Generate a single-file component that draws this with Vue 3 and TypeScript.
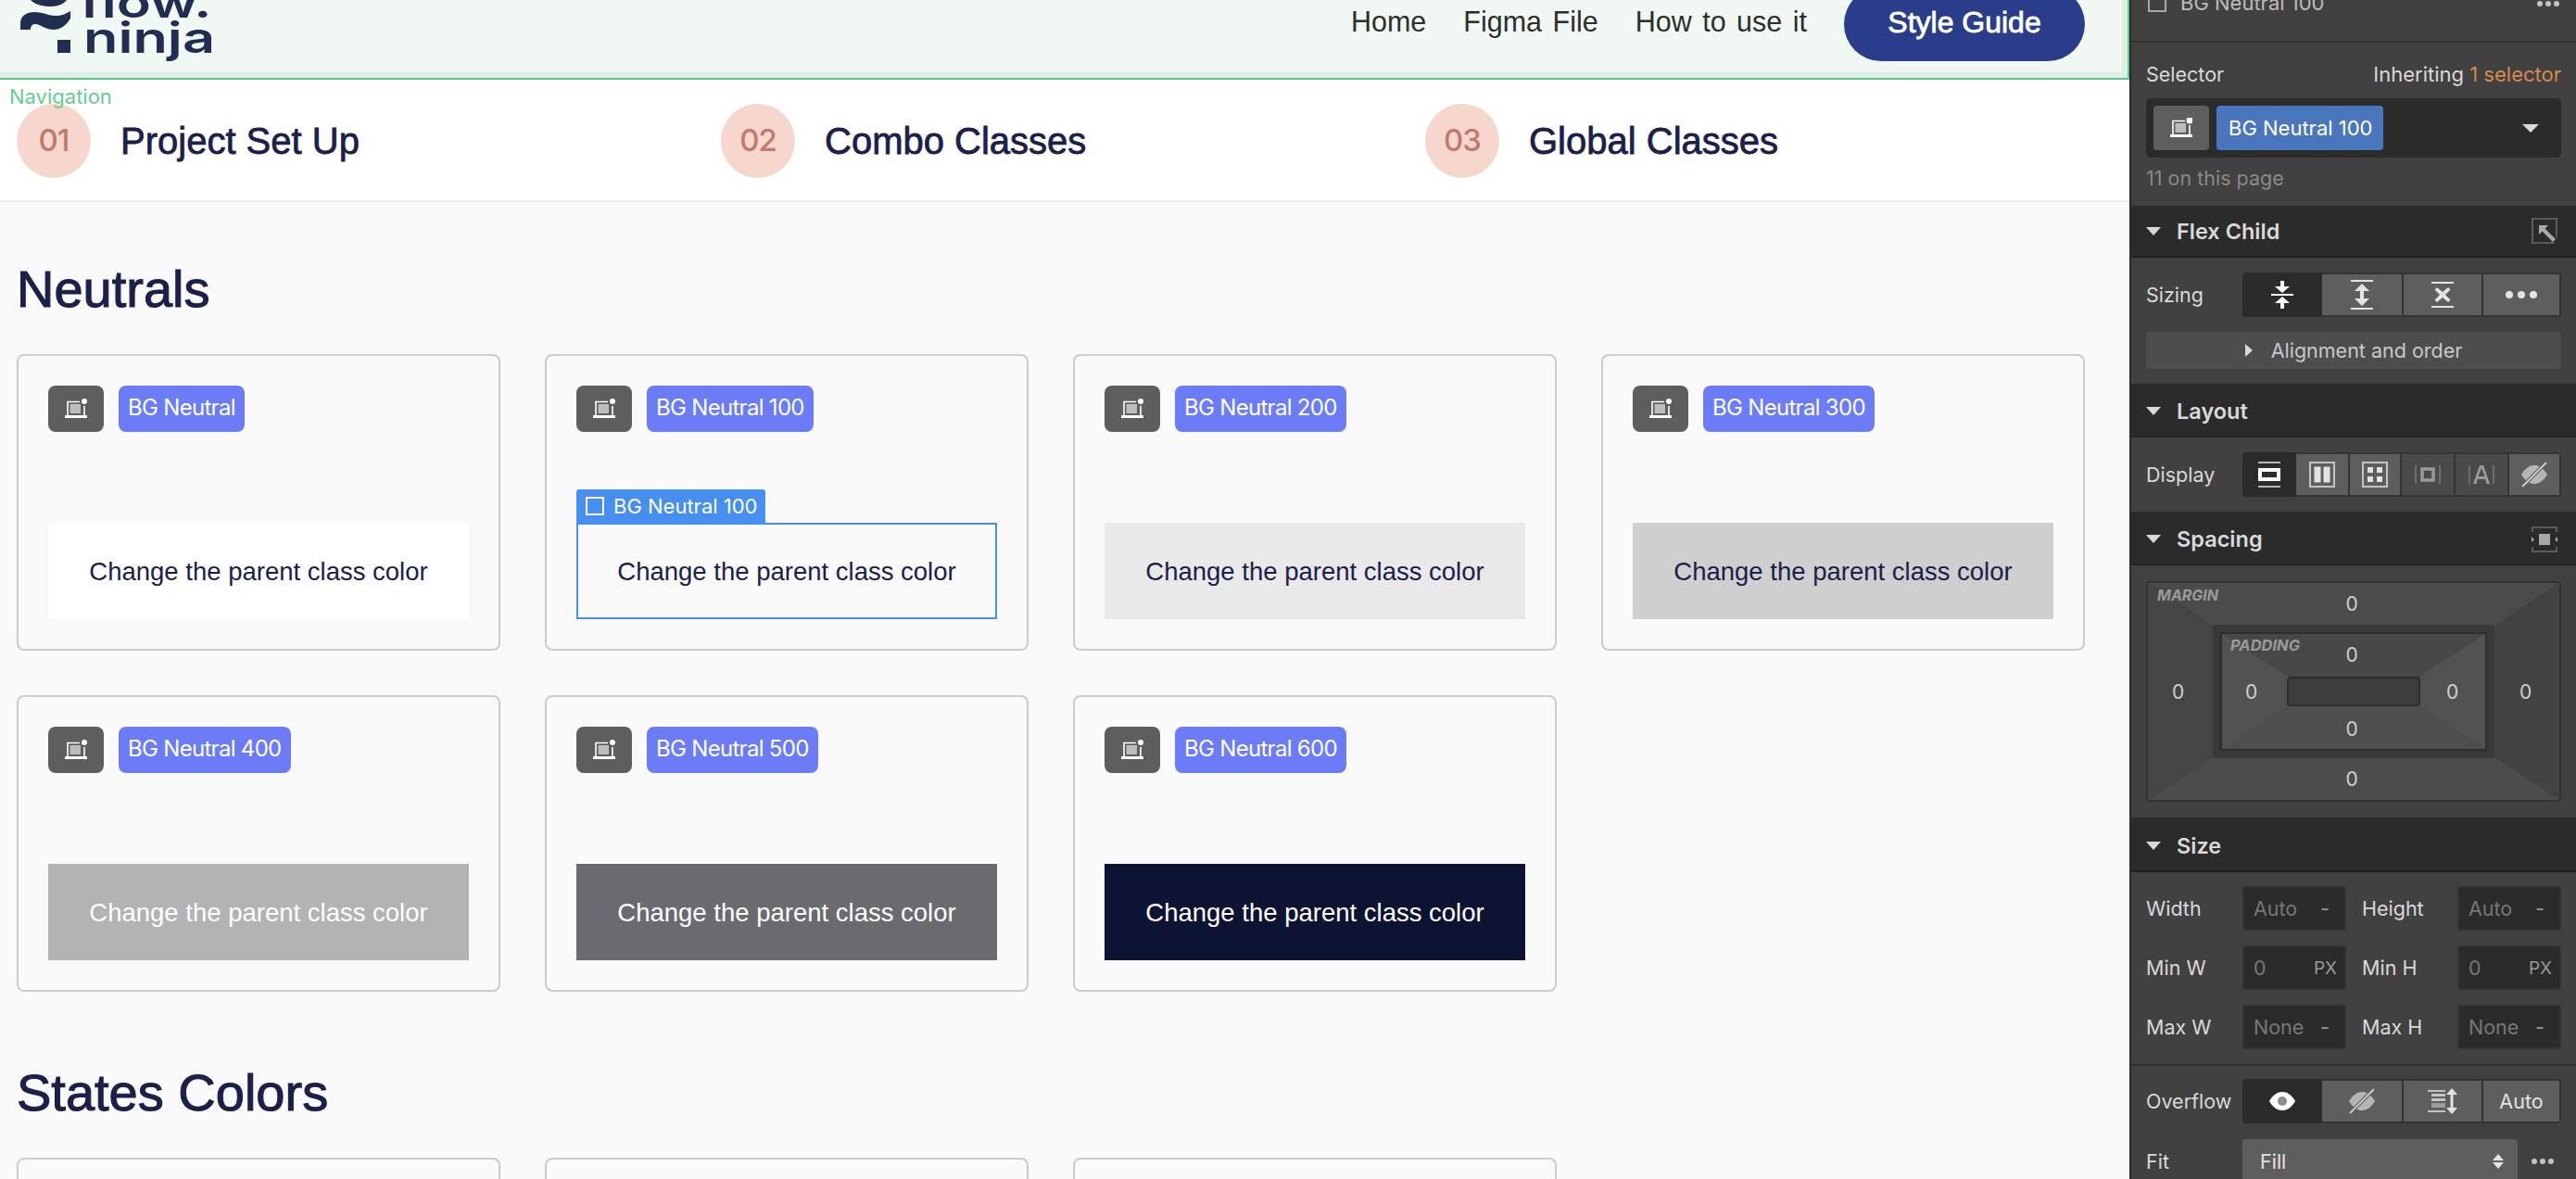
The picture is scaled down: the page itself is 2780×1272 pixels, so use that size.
<template>
  <div class="page">
    <main class="canvas">
      <header class="nav">
        <div class="nav-inner">
          <a class="logo">
            <svg class="logo-mark" width="80" height="60" viewBox="0 0 80 60">
              <path d="M33 0 C39 6 48 7 55 7 C63 7 69 4 72 0 Z" />
              <path d="M22 32 V25 C22 17 29 13 37 13 C47 13 52 17 60 17 C66 17 71 15 76 12 V20 C71 28 65 32 58 32 C48 32 44 26 38 26 C35 26 33 28 33 32 Z" />
              <rect x="62" y="43" width="14" height="14" />
            </svg>
            <span class="logo-flow">flow.</span>
            <span class="logo-ninja">ninja</span>
          </a>
          <nav class="links">
            <a>Home</a>
            <a>Figma File</a>
            <a>How to use it</a>
            <button class="guide">Style Guide</button>
          </nav>
        </div>
      </header>
      <span class="nav-label">Navigation</span>

      <div class="steps">
        <div v-for="step in steps" :key="step.num" class="step">
          <span class="step-num">{{ step.num }}</span>
          <span class="step-title">{{ step.title }}</span>
        </div>
      </div>

      <section class="group">
        <h2>Neutrals</h2>
        <div class="card-grid">
          <article v-for="card in neutrals" :key="card.name" class="card">
            <div class="tag-row">
              <span class="class-icon">
                <svg width="24" height="22" viewBox="0 0 24 22">
                  <path d="M3 18V3.5H16" fill="none" stroke="#fff" stroke-width="1.6" />
                  <rect x="5.5" y="6" width="11.5" height="10" fill="#bdbdbd" />
                  <path d="M21 8v10" stroke="#fff" stroke-width="1.6" />
                  <circle cx="21" cy="3" r="3" fill="#fff" />
                  <rect x="0" y="18" width="24" height="3" fill="#fff" />
                </svg>
              </span>
              <span class="tag">{{ card.name }}</span>
            </div>
            <div :class="['swatch', card.cls]">
              <span v-if="card.selected" class="sel-label"><i class="sel-box"></i>{{ card.name }}</span>
              Change the parent class color
            </div>
          </article>
        </div>
      </section>

      <section class="group states">
        <h2>States Colors</h2>
        <div class="card-grid">
          <article v-for="n in 3" :key="n" class="card"></article>
        </div>
      </section>
    </main>

    <aside class="panel">
      <div class="panel-top">
        <span class="top-check"></span>
        <span class="top-name">BG Neutral 100</span>
        <span class="dots top-dots"><i></i><i></i><i></i></span>
      </div>

      <div class="selector">
        <div class="sel-head">
          <span>Selector</span>
          <span class="inherit">Inheriting <em>1 selector</em></span>
        </div>
        <div class="sel-field">
          <span class="sel-icon">
            <svg width="24" height="22" viewBox="0 0 24 22">
              <path d="M3 18V3.5H16" fill="none" stroke="#fff" stroke-width="1.6" />
              <rect x="5.5" y="6" width="11.5" height="10" fill="#bdbdbd" />
              <path d="M21 8v10" stroke="#fff" stroke-width="1.6" />
              <circle cx="21" cy="3" r="3.5" fill="#fff" />
              <rect x="0" y="18" width="24" height="3" fill="#fff" />
            </svg>
          </span>
          <span class="sel-tag">BG Neutral 100</span>
          <i class="sel-caret"></i>
        </div>
        <div class="sel-count">11 on this page</div>
      </div>

      <div class="p-head flex-head">
        <i class="tri"></i><span>Flex Child</span>
        <svg class="head-icon" width="28" height="28" viewBox="0 0 28 28">
          <path d="M24 27H1V1h26v20" fill="none" stroke="#6b6b6b" stroke-width="1.6" />
          <path d="M8 8h10l-3.5 3.5L26 23l-3 3-11.500-11.500L8 18Z" fill="#a8a8a8" />
        </svg>
      </div>
      <div class="p-body sizing">
        <div class="row">
          <span class="lbl">Sizing</span>
          <div class="seg seg-4">
            <span class="on">
              <svg width="24" height="30" viewBox="0 0 24 30" fill="#fff">
                <path d="M0 14h24v2H0z" />
                <path d="M10 0h4v6h6l-8 7-8-7h6z" />
                <path d="M12 17l8 7h-6v6h-4v-6H4z" />
              </svg>
            </span>
            <span>
              <svg width="24" height="32" viewBox="0 0 24 32" fill="#e3e3e3">
                <path d="M0 0h24v2H0zM0 30h24v2H0z" />
                <path d="M12 4l8 8h-6v8h6l-8 8-8-8h6v-8H4z" />
              </svg>
            </span>
            <span>
              <svg width="24" height="28" viewBox="0 0 24 28" fill="#e3e3e3">
                <path d="M0 0h24v2H0zM0 26h24v2H0z" />
                <path d="M6 6l6 5 6-5 2.500 2.500-5.500 5.500 5.500 5.500L18 22l-6-5-6 5-2.500-2.500L9 14 3.500 8.500z" />
              </svg>
            </span>
            <span class="dots big"><i></i><i></i><i></i></span>
          </div>
        </div>
        <div class="align-btn"><i class="tri-r"></i>Alignment and order</div>
      </div>

      <div class="p-head layout-head">
        <i class="tri"></i><span>Layout</span>
      </div>
      <div class="p-body display">
        <div class="row">
          <span class="lbl">Display</span>
          <div class="seg seg-6">
            <span class="on">
              <svg width="24" height="28" viewBox="0 0 24 28">
                <path d="M0 1h24M0 27h24" stroke="#e6e6e6" stroke-width="1.6" />
                <rect x="2" y="9" width="20" height="10" fill="none" stroke="#fff" stroke-width="4" />
              </svg>
            </span>
            <span>
              <svg width="28" height="28" viewBox="0 0 28 28">
                <rect x="1" y="1" width="26" height="26" fill="none" stroke="#c4c4c4" stroke-width="2" />
                <rect x="5.500" y="5.500" width="7" height="17" fill="#e3e3e3" />
                <rect x="15.500" y="5.500" width="7" height="17" fill="#e3e3e3" />
              </svg>
            </span>
            <span>
              <svg width="28" height="28" viewBox="0 0 28 28" fill="#e3e3e3">
                <rect x="1" y="1" width="26" height="26" fill="none" stroke="#c4c4c4" stroke-width="2" />
                <rect x="6" y="6" width="6" height="6" />
                <rect x="16" y="6" width="6" height="6" />
                <rect x="6" y="16" width="6" height="6" />
                <rect x="16" y="16" width="6" height="6" />
              </svg>
            </span>
            <span class="dim">
              <svg width="28" height="28" viewBox="0 0 28 28">
                <path d="M1 4v20M27 4v20" stroke="#777" stroke-width="1.600" />
                <rect x="8" y="8" width="12" height="12" fill="none" stroke="#9a9a9a" stroke-width="3.500" />
              </svg>
            </span>
            <span class="dim">
              <svg width="28" height="28" viewBox="0 0 28 28">
                <path d="M1 4v20M27 4v20" stroke="#777" stroke-width="1.600" />
                <path d="M5 24l7-20h4l7 20h-3.500l-1.500-5h-8.500L8.500 24zM10.500 16h7L14 7z" fill="#9a9a9a" />
              </svg>
            </span>
            <span>
              <svg width="30" height="28" viewBox="0 0 30 28">
                <path d="M1 14c5-8 10-10 14-10s9 2 14 10c-5 8-10 10-14 10S6 22 1 14z" fill="#b5b5b5" />
                <path d="M2 27L28 1" stroke="#5e5e5e" stroke-width="4" />
                <path d="M2 27L28 1" stroke="#cfcfcf" stroke-width="1.800" />
              </svg>
            </span>
          </div>
        </div>
      </div>

      <div class="p-head spacing-head">
        <i class="tri"></i><span>Spacing</span>
        <svg class="head-icon" width="28" height="28" viewBox="0 0 28 28">
          <path d="M1 6V1h26v5M1 22v5h26v-5" fill="none" stroke="#6b6b6b" stroke-width="1.600" />
          <rect x="8" y="8" width="12" height="12" fill="#a8a8a8" />
          <path d="M0 11l3 3-3 3zM28 11l-3 3 3 3z" fill="#a8a8a8" />
        </svg>
      </div>
      <div class="p-body spacing">
        <div class="box margin">
          <svg class="bevel" viewBox="0 0 100 100" preserveAspectRatio="none">
            <polygon points="0,0 100,0 84,20 16,20" fill="#4b4b4b" />
            <polygon points="0,0 16,20 16,80 0,100" fill="#454545" />
            <polygon points="100,0 84,20 84,80 100,100" fill="#434343" />
            <polygon points="0,100 16,80 84,80 100,100" fill="#4c4c4c" />
          </svg>
          <span class="box-title">MARGIN</span>
          <span class="val top">0</span>
          <span class="val left">0</span>
          <div class="box padding">
            <svg class="bevel" viewBox="0 0 100 100" preserveAspectRatio="none">
              <polygon points="0,0 100,0 75,37 25,37" fill="#484848" />
              <polygon points="0,0 25,37 25,63 0,100" fill="#525252" />
              <polygon points="100,0 75,37 75,63 100,100" fill="#525252" />
              <polygon points="0,100 25,63 75,63 100,100" fill="#4e4e4e" />
            </svg>
            <span class="box-title">PADDING</span>
            <span class="val top">0</span>
            <span class="val left">0</span>
            <div class="core"></div>
            <span class="val right">0</span>
            <span class="val bottom">0</span>
          </div>
          <span class="val right">0</span>
          <span class="val bottom">0</span>
        </div>
      </div>

      <div class="p-head size-head">
        <i class="tri"></i><span>Size</span>
      </div>
      <div class="p-body size">
        <div v-for="r in sizeRows" :key="r[0].label" class="size-row">
          <template v-for="f in r" :key="f.label">
            <span class="lbl">{{ f.label }}</span>
            <div class="input">
              <span>{{ f.value }}</span>
              <b :class="{ px: f.unit === 'PX' }">{{ f.unit }}</b>
            </div>
          </template>
        </div>
      </div>
      <div class="p-body overflow">
        <div class="row">
          <span class="lbl">Overflow</span>
          <div class="seg seg-4">
            <span class="on">
              <svg width="30" height="22" viewBox="0 0 30 22">
                <path d="M1 11C5 4 10 1 15 1s10 3 14 10c-4 7-9 10-14 10S5 18 1 11z" fill="#fff" />
                <circle cx="15" cy="11" r="5" fill="#8c8c8c" />
              </svg>
            </span>
            <span>
              <svg width="30" height="28" viewBox="0 0 30 28">
                <path d="M1 14c5-8 10-10 14-10s9 2 14 10c-5 8-10 10-14 10S6 22 1 14z" fill="#b5b5b5" />
                <path d="M2 27L28 1" stroke="#5e5e5e" stroke-width="4" />
                <path d="M2 27L28 1" stroke="#cfcfcf" stroke-width="1.800" />
              </svg>
            </span>
            <span>
              <svg width="32" height="28" viewBox="0 0 32 28">
                <path d="M0 3h19M0 25h19" stroke="#e3e3e3" stroke-width="1.600" />
                <rect x="4" y="6" width="15" height="3" fill="#c4c4c4" />
                <rect x="4" y="11" width="15" height="3" fill="#c4c4c4" />
                <rect x="4" y="16" width="15" height="5" fill="#9c9c9c" />
                <path d="M26 0l6 7h-4.500v14H32l-6 7-6-7h4.500V7H20z" fill="#e3e3e3" />
              </svg>
            </span>
            <span class="txt">Auto</span>
          </div>
        </div>
        <div class="fit-row">
          <span class="lbl">Fit</span>
          <div class="fit-select">
            <span>Fill</span>
            <svg width="12" height="16" viewBox="0 0 12 16" fill="#e3e3e3">
              <path d="M6 0l6 7H0zM0 9h12l-6 7z" />
            </svg>
          </div>
          <span class="dots fit-dots"><i></i><i></i><i></i></span>
        </div>
      </div>
    </aside>
  </div>
</template>

<script setup lang="ts">
interface Step {
  num: string
  title: string
}

interface NeutralCard {
  name: string
  cls: string
  selected?: boolean
}

interface SizeField {
  label: string
  value: string
  unit: string
}

const steps: Step[] = [
  { num: '01', title: 'Project Set Up' },
  { num: '02', title: 'Combo Classes' },
  { num: '03', title: 'Global Classes' }
]

const neutrals: NeutralCard[] = [
  { name: 'BG Neutral', cls: 'n0' },
  { name: 'BG Neutral 100', cls: 'n100', selected: true },
  { name: 'BG Neutral 200', cls: 'n200' },
  { name: 'BG Neutral 300', cls: 'n300' },
  { name: 'BG Neutral 400', cls: 'n400' },
  { name: 'BG Neutral 500', cls: 'n500' },
  { name: 'BG Neutral 600', cls: 'n600' }
]

const sizeRows: SizeField[][] = [
  [
    { label: 'Width', value: 'Auto', unit: '-' },
    { label: 'Height', value: 'Auto', unit: '-' }
  ],
  [
    { label: 'Min W', value: '0', unit: 'PX' },
    { label: 'Min H', value: '0', unit: 'PX' }
  ],
  [
    { label: 'Max W', value: 'None', unit: '-' },
    { label: 'Max H', value: 'None', unit: '-' }
  ]
]
</script>

<style>
html,
body {
  margin: 0;
  overflow: hidden;
}
</style>

<style scoped>
.page {
  display: flex;
  width: 2780px;
  height: 1272px;
  overflow: hidden;
  font-family: Inter, "Liberation Sans", sans-serif;
}

.canvas {
  position: relative;
  width: 2298px;
  flex: none;
  background: #f9f9f9;
  overflow: hidden;
  font-family: "Liberation Sans", Arial, sans-serif;
}

/* navbar, scrolled so its top is cut off */
.nav {
  box-sizing: border-box;
  height: 86px;
  padding: 0 6px 6px 0;
  background: #dcf0e5;
  border-right: 2px solid #62c78e;
  border-bottom: 2px solid #62c78e;
  overflow: hidden;
}

.nav-inner {
  position: relative;
  display: flex;
  justify-content: flex-end;
  height: 78px;
  padding-right: 40px;
  background: #f1f8f3;
}

.logo {
  position: absolute;
  left: 0;
  top: 0;
  width: 260px;
  height: 78px;
  overflow: hidden;
  color: #212e52;
  font-family: Inter, sans-serif;
  font-weight: 600;
}

.logo-mark {
  display: block;
  fill: #212e52;
}

.logo-flow,
.logo-ninja {
  position: absolute;
  font-size: 46px;
  transform-origin: left top;
  transform: scaleX(1.33);
}

.logo-flow {
  left: 86px;
  top: -13px;
  line-height: 30px;
}

.logo-ninja {
  left: 90px;
  top: 17px;
  line-height: 46px;
}

.links {
  display: flex;
  align-items: center;
  gap: 40px;
  height: 80px;
  margin-top: -14px;
  font-size: 30.500px;
  word-spacing: 3px;
  color: #2b2f2b;
}

.links a {
  margin-top: -6px;
}

.guide {
  width: 260px;
  height: 80px;
  padding: 0 0 3px;
  border: 0;
  border-radius: 40px;
  background: #2a3d8b;
  color: #fff;
  font: 400 32px "Liberation Sans", Arial, sans-serif;
  -webkit-text-stroke: 0.8px #fff;
}

.nav-label {
  position: absolute;
  left: 10px;
  top: 90px;
  z-index: 2;
  font-family: Inter, sans-serif;
  font-size: 22px;
  line-height: 28px;
  color: #66cc8f;
}

.steps {
  display: grid;
  grid-template-columns: repeat(3, 760px);
  box-sizing: border-box;
  height: 132px;
  padding: 26px 0 0 18px;
  background: #fff;
  border-bottom: 2px solid #ececec;
}

.step {
  display: flex;
  align-items: center;
  gap: 32px;
  height: 80px;
}

.step-num {
  display: flex;
  align-items: center;
  justify-content: center;
  box-sizing: border-box;
  width: 80px;
  height: 80px;
  padding-bottom: 3px;
  border-radius: 50%;
  background: #f7d7cd;
  color: #c0796a;
  font-family: Inter, sans-serif;
  font-size: 33px;
  font-weight: 500;
  letter-spacing: -1px;
}

.step-title {
  font-size: 40px;
  color: #1a2049;
  -webkit-text-stroke: 0.8px #1a2049;
}

.group {
  padding: 60px 0 0 18px;
}

.group.states {
  padding-top: 75px;
}

h2 {
  margin: 0 0 36px;
  font-size: 56px;
  line-height: 68px;
  font-weight: 400;
  color: #1a2049;
  -webkit-text-stroke: 1.1px #1a2049;
}

.card-grid {
  display: grid;
  grid-template-columns: repeat(4, 522px);
  gap: 48px;
}

.card {
  display: flex;
  flex-direction: column;
  justify-content: space-between;
  box-sizing: border-box;
  height: 320px;
  padding: 32px;
  border: 2px solid #cccccc;
  border-radius: 8px;
}

.tag-row {
  display: flex;
  gap: 16px;
}

.class-icon {
  display: flex;
  align-items: center;
  justify-content: center;
  width: 60px;
  height: 50px;
  border-radius: 8px;
  background: #5e5e5e;
}

.tag {
  display: flex;
  align-items: center;
  box-sizing: border-box;
  height: 50px;
  padding: 0 10px 3px;
  border-radius: 8px;
  background: #6b7cf6;
  color: #fff;
  font-family: Inter, sans-serif;
  font-size: 24px;
  letter-spacing: -0.700px;
}

.swatch {
  position: relative;
  display: flex;
  align-items: center;
  justify-content: center;
  box-sizing: border-box;
  height: 104px;
  padding-top: 2px;
  font-size: 27.500px;
  color: #1a2049;
}

.n0 { background: #fff; }
.n100 { background: #f9f9f9; border: 2px solid #468ff0; }
.n200 { background: #e9e9e9; }
.n300 { background: #cfcfcf; }
.n400 { background: #b3b3b3; color: #fff; }
.n500 { background: #6b6b6f; color: #fff; }
.n600 { background: #0d1333; color: #fff; }

.sel-label {
  position: absolute;
  left: -2px;
  top: -38px;
  display: flex;
  align-items: center;
  gap: 10px;
  box-sizing: border-box;
  width: 204px;
  height: 36px;
  padding-left: 10px;
  border-radius: 3px 3px 0 0;
  background: #468ff0;
  color: #fff;
  font-family: Inter, sans-serif;
  font-size: 22px;
}

.sel-box {
  box-sizing: border-box;
  width: 20px;
  height: 20px;
  border: 2px solid #fff;
}

/* right settings panel */
.panel {
  width: 482px;
  flex: none;
  box-sizing: border-box;
  border-left: 2px solid #2b2b2b;
  background: #414141;
  color: #d9d9d9;
  font-size: 21.500px;
}

.panel-top {
  position: relative;
  display: flex;
  gap: 15px;
  box-sizing: border-box;
  height: 46px;
  padding-left: 18px;
  border-bottom: 2px solid #333;
}

.top-check {
  box-sizing: border-box;
  width: 20px;
  height: 20px;
  margin-top: -7px;
  border: 2px solid #a8a8a8;
}

.top-name {
  margin-top: -12px;
  font-size: 22px;
  line-height: 30px;
  color: #bdbdbd;
}

.dots {
  display: inline-flex;
  align-items: center;
  gap: 3px;
}

.dots i {
  width: 6px;
  height: 6px;
  border-radius: 50%;
  background: #c4c4c4;
}

.top-dots {
  position: absolute;
  right: 18px;
  top: 1px;
}

.selector {
  box-sizing: border-box;
  height: 176px;
  padding: 20px 16px 0;
}

.sel-head {
  display: flex;
  justify-content: space-between;
  height: 28px;
  line-height: 28px;
}

.inherit {
  font-size: 22px;
}

.sel-head em {
  font-style: normal;
  color: #d9884f;
}

.sel-field {
  display: flex;
  align-items: center;
  gap: 8px;
  box-sizing: border-box;
  height: 64px;
  margin-top: 12px;
  padding: 0 8px;
  border-radius: 6px;
  background: #2b2b2b;
}

.sel-icon {
  display: flex;
  align-items: center;
  justify-content: center;
  width: 60px;
  height: 48px;
  border-radius: 4px;
  background: #5e5e5e;
}

.sel-tag {
  display: flex;
  align-items: center;
  width: 180px;
  height: 48px;
  box-sizing: border-box;
  padding-left: 13px;
  border-radius: 4px;
  background: #4a76bd;
  color: #fff;
  font-size: 22px;
}

.sel-caret {
  width: 0;
  height: 0;
  margin: 0 16px 0 auto;
  border-left: 9px solid transparent;
  border-right: 9px solid transparent;
  border-top: 9px solid #d9d9d9;
}

.sel-count {
  margin-top: 8px;
  line-height: 28px;
  color: #8a8a8a;
}

.p-head {
  display: flex;
  align-items: center;
  gap: 17px;
  box-sizing: border-box;
  height: 58px;
  padding: 2px 20px 0 16px;
  background: #2b2b2b;
  border-bottom: 2px solid #222;
  font-weight: 600;
  font-size: 23.500px;
}

.flex-head {
  height: 56px;
  padding-top: 0;
}

.spacing-head {
  padding-top: 3px;
}

.size-head {
  height: 59px;
  padding-top: 3px;
}

.tri {
  width: 0;
  height: 0;
  border-left: 8px solid transparent;
  border-right: 8px solid transparent;
  border-top: 9px solid #d9d9d9;
}

.head-icon {
  margin-left: auto;
}

.p-body {
  box-sizing: border-box;
  padding: 0 16px;
}

.row {
  display: flex;
  align-items: center;
  justify-content: space-between;
}

.lbl {
  color: #d9d9d9;
}

.seg {
  display: grid;
  box-sizing: border-box;
  width: 344px;
  height: 48px;
  gap: 2px;
  padding: 2px;
  border-radius: 4px;
  background: #333;
}

.seg-4 {
  grid-template-columns: 84px 84px 84px 1fr;
}

.seg-6 {
  grid-template-columns: 56px 54px 54px 56px 56px 1fr;
}

.seg span {
  display: flex;
  align-items: center;
  justify-content: center;
  background: #5e5e5e;
}

.seg span.on {
  background: #2b2b2b;
  margin: -2px 0 -2px -2px;
  border-radius: 4px 0 0 4px;
}

.seg span.on + span {
  margin-left: -2px;
}

.seg span.dim {
  background: #4a4a4a;
}

.seg span.txt {
  color: #e3e3e3;
}

.dots.big {
  gap: 5px;
}

.dots.big i {
  width: 8px;
  height: 8px;
  background: #e3e3e3;
}

.sizing {
  height: 136px;
  padding-top: 16px;
}

.align-btn {
  display: flex;
  align-items: center;
  justify-content: center;
  gap: 20px;
  height: 40px;
  margin-top: 16px;
  border-radius: 4px;
  background: #4d4d4d;
  color: #c8c8c8;
}

.tri-r {
  width: 0;
  height: 0;
  border-top: 7px solid transparent;
  border-bottom: 7px solid transparent;
  border-left: 8px solid #d9d9d9;
}

.display {
  height: 80px;
  padding-top: 16px;
}

.spacing {
  height: 272px;
  padding-top: 17px;
}

.box {
  position: relative;
  display: grid;
  box-sizing: border-box;
  justify-items: center;
  align-items: center;
  border: 2px solid #333;
  border-radius: 4px;
  font-size: 21px;
  color: #d0d0d0;
}

.margin {
  width: 448px;
  height: 238px;
  grid-template-columns: 70px 304px 70px;
  grid-template-rows: 45px 144px 45px;
  grid-template-areas:
    ". top ."
    "left mid right"
    ". bottom .";
}

.padding {
  grid-area: mid;
  width: 304px;
  height: 144px;
  border: 8px solid #393939;
  box-shadow: inset 0 0 0 2px #2f2f2f;
  grid-template-columns: 72px 144px 72px;
  grid-template-rows: 48px 32px 48px;
  grid-template-areas:
    ". top ."
    "left core right"
    ". bottom .";
}

.bevel {
  position: absolute;
  inset: 0;
  width: 100%;
  height: 100%;
}

.padding .bevel {
  inset: 2px;
  width: calc(100% - 4px);
  height: calc(100% - 4px);
}

.box-title {
  position: absolute;
  left: 10px;
  top: 3px;
  font-size: 16px;
  line-height: 20px;
  font-weight: 700;
  font-style: italic;
  color: #9a9a9a;
}

.padding .box-title {
  left: 11px;
  top: 4px;
  font-size: 16.500px;
}

.val {
  position: relative;
}

.val.top { grid-area: top; margin-right: 4px; }
.val.left { grid-area: left; margin-right: 5px; }
.val.right { grid-area: right; margin-right: 3px; }
.val.bottom { grid-area: bottom; margin-right: 4px; }

.core {
  position: relative;
  grid-area: core;
  box-sizing: border-box;
  width: 144px;
  height: 32px;
  border: 2px solid #2f2f2f;
  border-radius: 4px;
  background: #3c3c3c;
}

.size {
  height: 209px;
  padding-top: 15px;
  border-bottom: 2px solid #333;
}

.size-row {
  display: grid;
  grid-template-columns: 104px 112px 120px 112px;
  align-items: center;
  height: 48px;
  margin-bottom: 16px;
}

.size-row > .lbl:nth-of-type(2) {
  padding-left: 17px;
}

.input {
  display: flex;
  align-items: center;
  justify-content: space-between;
  box-sizing: border-box;
  height: 48px;
  padding: 0 16px 0 10px;
  border: 2px solid #333;
  border-radius: 4px;
  background: #2b2b2b;
  color: #777;
}

.input b {
  font-weight: 400;
  color: #999;
}

.input b.px {
  margin-right: -8px;
  font-size: 19px;
}

.overflow {
  padding-top: 14px;
}

.fit-row {
  display: flex;
  align-items: center;
  height: 48px;
  margin-top: 17px;
}

.fit-row .lbl {
  width: 104px;
}

.fit-select {
  display: flex;
  align-items: center;
  justify-content: space-between;
  box-sizing: border-box;
  width: 297px;
  height: 48px;
  padding: 0 15px 0 19px;
  border-radius: 4px 4px 0 0;
  background: #5e5e5e;
  color: #e3e3e3;
}

.fit-dots {
  margin-left: 15px;
}
</style>
